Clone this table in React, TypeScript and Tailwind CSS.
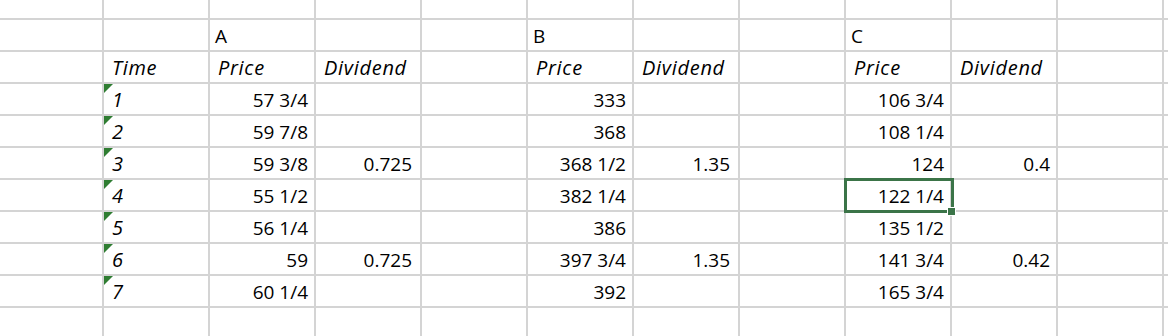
import React from 'react'

type Cell = { t?: string; align?: 'l' | 'r'; it?: boolean; flag?: boolean; sel?: boolean; pr?: string }

const font = { fontFamily: '"Open Sans", Lato, sans-serif' }

const data: [string, string, string, string, string, string][] = [
  ['57 3/4', '', '333', '', '106 3/4', ''],
  ['59 7/8', '', '368', '', '108 1/4', ''],
  ['59 3/8', '0.725', '368 1/2', '1.35', '124', '0.4'],
  ['55 1/2', '', '382 1/4', '', '122 1/4', ''],
  ['56 1/4', '', '386', '', '135 1/2', ''],
  ['59', '0.725', '397 3/4', '1.35', '141 3/4', '0.42'],
  ['60 1/4', '', '392', '', '165 3/4', ''],
]

function buildRows(): Cell[][] {
  const blank = (): Cell[] => Array.from({ length: 12 }, () => ({}))
  const rows: Cell[][] = []
  rows.push(blank())
  const letters = blank()
  letters[2] = { t: 'A' }
  letters[5] = { t: 'B' }
  letters[8] = { t: 'C' }
  rows.push(letters)
  const head = blank()
  head[1] = { t: 'Time', it: true }
  ;[2, 5, 8].forEach((i) => (head[i] = { t: 'Price', it: true }))
  ;[3, 6, 9].forEach((i) => (head[i] = { t: 'Dividend', it: true }))
  rows.push(head)
  data.forEach((d, n) => {
    const r = blank()
    r[1] = { t: String(n + 1), it: true, flag: true }
    r[2] = { t: d[0], align: 'r' }
    r[3] = { t: d[1], align: 'r', pr: 'pr-[8px]' }
    r[5] = { t: d[2], align: 'r' }
    r[6] = { t: d[3], align: 'r', pr: 'pr-[8px]' }
    r[8] = { t: d[4], align: 'r', sel: n === 3 }
    r[9] = { t: d[5], align: 'r' }
    rows.push(r)
  })
  rows.push(blank())
  return rows
}

export default function App() {
  const rows = buildRows()
  return (
    <div className="w-[1168px] h-[336px] overflow-hidden bg-white text-black" style={font}>
      <div className="grid grid-cols-[104px_repeat(10,106px)_4px] grid-rows-[20px_repeat(9,32px)_28px]">
        {rows.map((row, ri) =>
          row.map((c, ci) => {
            const last = ci === 11
            const lastRow = ri === rows.length - 1
            return (
              <div
                key={`${ri}-${ci}`}
                className={`relative flex items-end border-[#d4d4d4] ${last ? '' : 'border-r-2'} ${lastRow ? '' : 'border-b-2'} ${
                  c.align === 'r' ? 'justify-end' : 'justify-start'
                }`}
              >
                {c.flag && (
                  <div className="absolute left-0 top-0 w-0 h-0 border-t-[9px] border-r-[9px] border-t-[#2f7d32] border-r-transparent" />
                )}
                {c.sel && (
                  <>
                    <div className="absolute -left-[2px] -top-[2px] -right-[4px] -bottom-[3px] border-[3px] border-[#3b7448] z-10" />
                    <div className="absolute -right-[6px] -bottom-[6px] w-[9px] h-[9px] bg-[#3b7448] border border-white z-20" />
                  </>
                )}
                {c.t && (
                  <span
                    className={`leading-[24px] pb-[2px] whitespace-nowrap ${
                      c.it ? 'italic text-[20px] tracking-[0.7px]' : 'text-[19px]'
                    } ${c.align === 'r' ? c.pr ?? 'pr-[6px]' : c.it ? 'pl-[8px]' : 'pl-[5px]'}`}
                  >
                    {c.t}
                  </span>
                )}
              </div>
            )
          })
        )}
      </div>
    </div>
  )
}
